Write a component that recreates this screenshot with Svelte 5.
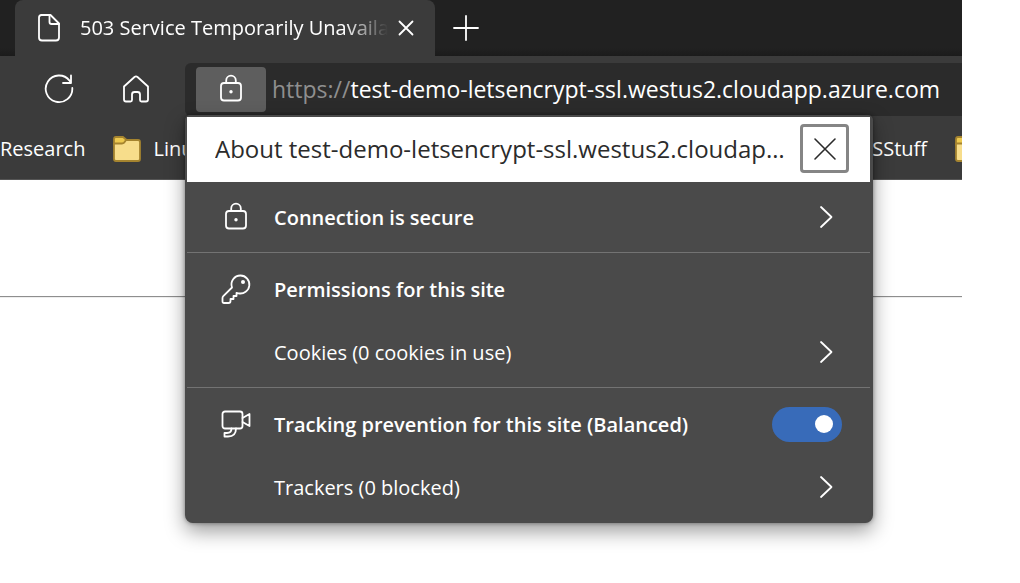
<script>
  let tracking = $state(true);
  const host = 'test-demo-letsencrypt-ssl.westus2.cloudapp.azure.com';
</script>

{#snippet lock()}
  <svg class="icon" viewBox="0 0 30 30" aria-hidden="true">
    <rect x="5" y="9" width="20" height="17.500" rx="3" />
    <path d="M10.2 9V6.500a4.800 4.800 0 0 1 9.600 0V9" />
    <circle class="dot" cx="15" cy="17.700" r="1.700" />
  </svg>
{/snippet}

{#snippet chevron()}
  <svg class="chevron" viewBox="0 0 14 24" aria-hidden="true"><path d="M2 2 12.500 12 2 22" /></svg>
{/snippet}

{#snippet folder()}
  <svg class="folder" viewBox="0 0 28 26" aria-hidden="true">
    <path class="back" d="M1 6V3q0-2 2-2h7l3 2.500V9H1z" />
    <path class="front" d="M1 7.500h8q2 0 3-2l1-1.500h12q2 0 2 2v17q0 2-2 2H3q-2 0-2-2z" />
  </svg>
{/snippet}

<div class="browser">
  <header class="tabs">
    <div class="tab">
      <svg class="icon" viewBox="0 0 30 30" aria-hidden="true">
        <path d="M7 2h9.500L25 10.500v14q0 3-3 3H8q-3 0-3-3V4.500Q5 2 7.500 2z" />
        <path d="M15.500 2v7q0 2 2 2H25" />
      </svg>
      <span class="tab-title">503 Service Temporarily Unavaila</span>
      <button class="plain" aria-label="Close tab">
        <svg class="small" viewBox="0 0 16 16"><path d="M1.500 1.500l13 13M14.500 1.500l-13 13" /></svg>
      </button>
    </div>
    <button class="plain new-tab" aria-label="New tab">
      <svg class="plus" viewBox="0 0 26 26"><path d="M13 1v24M1 13h24" /></svg>
    </button>
  </header>

  <div class="toolbar">
    <button class="plain" aria-label="Refresh">
      <svg class="icon" viewBox="0 0 30 30"><path d="M28.300 14A13.300 13.300 0 1 1 25.500 6.600L27 9M27 1.500V9H19" /></svg>
    </button>
    <button class="plain" aria-label="Home">
      <svg class="icon" viewBox="0 0 30 30"><path d="M3 12.500 13.500 3q1.500-1.200 3 0L27 12.500V25.500q0 2-2 2h-4.500q-1.500 0-1.500-1.500V20.500q0-2.500-2.500-2.500h-3Q11 18 11 20.500V26q0 1.500-1.500 1.500H5q-2 0-2-2z" /></svg>
    </button>
    <div class="address">
      <button class="site" aria-label="View site information">{@render lock()}</button>
      <span class="url"><span class="scheme">https://</span>{host}</span>
    </div>
  </div>

  <nav class="bookmarks" aria-label="Favorites">
    <a href="#research">Research</a>
    <a href="#linux">{@render folder()}Linux</a>
    <a class="last" href="#stuff">SStuff</a>
    <a class="cut" href="#more" aria-label="More">{@render folder()}</a>
  </nav>

  <main><hr /></main>

  <section class="popup" aria-labelledby="about">
    <div class="head">
      <h1 id="about">About {host}</h1>
      <button class="close" aria-label="Close">
        <svg class="cross" viewBox="0 0 24 24"><path d="M2 2l20 20M22 2 2 22" /></svg>
      </button>
    </div>
    <div class="group single">
      <button class="row strong">{@render lock()}<span>Connection is secure</span>{@render chevron()}</button>
    </div>
    <div class="group">
      <div class="row strong">
        <svg class="icon" viewBox="0 0 30 30" aria-hidden="true">
          <path d="M19.500 1.500a9 9 0 1 1-2 17.800L15.500 19v3h-3v3H9.500v2q0 2-2 2H3q-1.500 0-1.500-1.500V24q0-1 .8-1.800L11 13.500A9 9 0 0 1 19.500 1.500z" />
          <circle class="dot" cx="22" cy="8" r="2" />
        </svg>
        <span>Permissions for this site</span>
      </div>
      <button class="row sub"><span>Cookies (0 cookies in use)</span>{@render chevron()}</button>
    </div>
    <div class="group">
      <div class="row strong">
        <svg class="icon" viewBox="0 0 30 30" aria-hidden="true">
          <rect x="1.500" y="2.500" width="20" height="17" rx="2.500" />
          <path d="M21.500 9l7-4v12l-7-4M15 19.500q0 8-8 8H3.500v-3.500H6q4.500 0 4.500-4.500" />
        </svg>
        <label for="tracking">Tracking prevention for this site (Balanced)</label>
        <input id="tracking" type="checkbox" role="switch" bind:checked={tracking} />
      </div>
      <button class="row sub"><span>Trackers (0 blocked)</span>{@render chevron()}</button>
    </div>
  </section>
</div>

<style>
  :global(body) { background: #fff; }
  .browser {
    position: relative;
    min-height: 100vh;
    margin-right: 58px;
    color: #fff;
    font: 20px/28px "Open Sans", "Noto Sans", sans-serif;
  }
  button { font: inherit; color: inherit; border: 0; padding: 0; background: none; }
  svg { display: block; flex: none; fill: none; stroke: currentColor; stroke-width: 1.8; stroke-linejoin: round; stroke-linecap: round; }
  .icon { width: 30px; height: 30px; }
  .dot { fill: currentColor; stroke: none; }
  .small { width: 16px; height: 16px; }
  .plus { width: 26px; height: 26px; }
  .cross { width: 24px; height: 24px; stroke-width: 1.6; }
  .chevron { width: 14px; height: 24px; }
  .folder { width: 28px; height: 26px; stroke: #a5842f; }
  .back { fill: #edc94f; }
  .front { fill: #f7dd8b; }

  .tabs { display: flex; height: 56px; padding-left: 15px; background: linear-gradient(#212121 48px, #1b1b1b); }
  .tab {
    display: flex;
    align-items: center;
    width: 420px;
    padding: 0 21px 0 19px;
    box-sizing: border-box;
    background: #3b3b3b;
    border-radius: 8px 8px 0 0;
  }
  .tab-title {
    flex: 1;
    min-width: 0;
    margin: 0 10px 0 16px;
    overflow: hidden;
    white-space: nowrap;
    mask-image: linear-gradient(to right, #000 calc(100% - 44px), transparent);
  }
  .new-tab { padding: 0 18px; }

  .toolbar { display: flex; align-items: center; gap: 47px; height: 62px; padding: 4px 0 0 44px; box-sizing: border-box; background: #3b3b3b; }
  .address {
    flex: 1;
    min-width: 0;
    display: flex;
    align-items: center;
    gap: 6px;
    height: 53px;
    margin-left: -13px;
    padding-left: 11px;
    background: #2b2b2b;
    border-radius: 6px 0 0 6px;
  }
  .site { display: flex; align-items: center; justify-content: center; width: 70px; height: 45px; background: #5e5e5e; border-radius: 4px; }
  .url { font-size: 23px; line-height: 36px; white-space: nowrap; overflow: hidden; }
  .scheme { color: #8f8f8f; }

  .bookmarks { display: flex; align-items: center; gap: 28px; height: 61px; background: #3b3b3b; border-bottom: 1px solid #555; overflow: hidden; }
  .bookmarks a { display: flex; align-items: center; gap: 12px; color: inherit; text-decoration: none; }
  .last { margin-left: auto; }
  .bookmarks .cut { width: 7px; }

  hr { margin: 116px 0 0; border: 0; border-top: 1px solid #8e8e8e; border-bottom: 1px solid #eee; }

  .popup {
    position: absolute;
    top: 115px;
    left: 185px;
    right: 89px;
    border: 2px solid #4a4a4a;
    border-width: 2px 3px 1px 2px;
    border-radius: 5px 5px 8px 8px;
    background: #4a4a4a;
    box-shadow: 0 8px 20px rgb(0 0 0 / 40%), 0 0 4px rgb(0 0 0 / 40%);
  }
  .head { display: flex; align-items: center; gap: 14px; height: 65px; padding: 0 21px 2px 28px; box-sizing: border-box; background: #fff; color: #2b2b2b; }
  h1 { flex: 1; min-width: 0; margin: 0; font-size: 24px; font-weight: 400; line-height: 36px; overflow: hidden; white-space: nowrap; text-overflow: ellipsis; }
  .close { display: flex; align-items: center; justify-content: center; width: 49px; height: 49px; border: 3px solid #858585; border-radius: 4px; }
  .group { padding-bottom: 8px; }
  .single { padding-bottom: 0; }
  .group + .group { border-top: 1px solid #737373; }
  .row { display: flex; align-items: center; gap: 23px; width: 100%; height: 72px; padding: 0 37px 0 34px; box-sizing: border-box; text-align: left; }
  .single .row { height: 70px; }
  .row span, .row label { flex: 1; padding-top: 2px; }
  .row.sub { height: 54px; padding-left: 87px; }
  .strong { font-weight: 600; }
  input {
    appearance: none;
    display: flex;
    align-items: center;
    width: 70px;
    height: 35px;
    margin: 0 -9px 0 0;
    padding: 0 9px;
    box-sizing: border-box;
    border-radius: 18px;
    background: #767676;
  }
  input::before { content: ""; width: 18px; height: 18px; border-radius: 50%; background: #fff; }
  input:checked { justify-content: flex-end; background: #386bb9; }
</style>
